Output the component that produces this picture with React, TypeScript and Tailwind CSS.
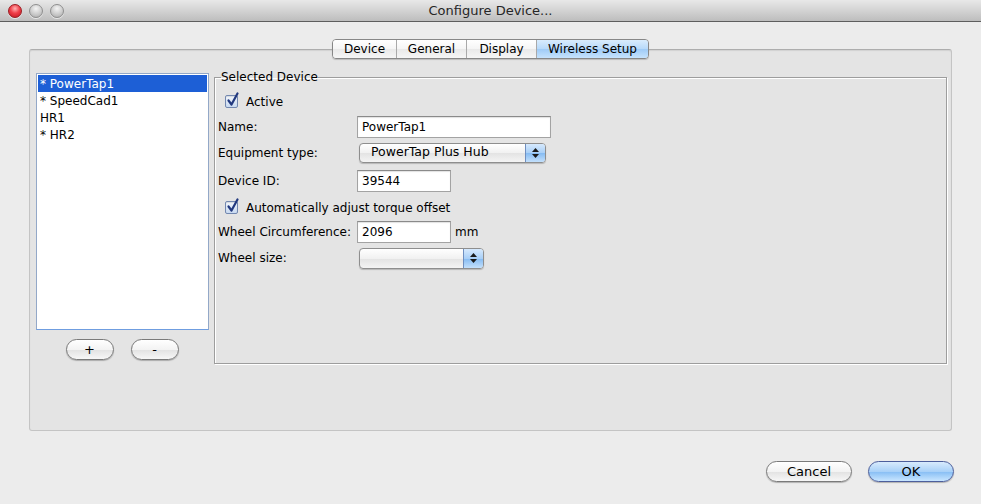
import { useState } from "react";

const devices = ["* PowerTap1", "* SpeedCad1", "HR1", "* HR2"];
const tabs = [
  { label: "Device", w: "w-[63px]" },
  { label: "General", w: "w-[70px]" },
  { label: "Display", w: "w-[70px]" },
  { label: "Wireless Setup", w: "w-[112px]" },
];

function TrafficLight({ red }: { red?: boolean }) {
  return (
    <div
      className={
        red
          ? "w-[14px] h-[14px] rounded-full border border-[#9b1c22] bg-[radial-gradient(circle_at_50%_30%,#ffb3b3_0%,#f0404a_45%,#c0141e_100%)] shadow-[0_1px_0_rgba(255,255,255,0.6)]"
          : "w-[14px] h-[14px] rounded-full border border-[#8f8f8f] bg-[radial-gradient(circle_at_50%_30%,#f4f4f4_0%,#cfcfcf_50%,#a9a9a9_100%)] shadow-[0_1px_0_rgba(255,255,255,0.6)]"
      }
    />
  );
}

function Checkbox({ label }: { label: string }) {
  return (
    <div className="flex items-center pl-[7px]">
      <div className="relative w-[13px] h-[13px] rounded-[2px] border border-[#7388b0] bg-[linear-gradient(#f4f8fd,#c9daf1)] shadow-[inset_0_1px_1px_rgba(0,0,0,0.12)]">
        <svg className="absolute -top-[4px] left-[0px]" width="14" height="15" viewBox="0 0 14 15">
          <path d="M2.5 8.5 L5.5 12.5 L11.5 1.5" fill="none" stroke="#22397f" strokeWidth="2.2" strokeLinecap="round" strokeLinejoin="round" />
        </svg>
      </div>
      <span className="ml-[8px]">{label}</span>
    </div>
  );
}

function TextField({ value, w }: { value: string; w: string }) {
  return (
    <div className={`${w} h-[22px] bg-white border border-[#a3a3a3] border-t-[#8a8a8a] shadow-[inset_0_1px_1px_rgba(0,0,0,0.12)] flex items-center pl-[4px]`}>
      {value}
    </div>
  );
}

function Combo({ value, w, h }: { value: string; w: string; h: string }) {
  return (
    <div className={`${w} ${h} ml-[2px] flex rounded-[4px] border border-[#8e8e8e] bg-[linear-gradient(#ffffff,#f1f1f1_50%,#e3e3e3_51%,#f4f4f4)] shadow-[0_1px_1px_rgba(0,0,0,0.2)] overflow-hidden`}>
      <div className="flex-1 flex items-center pl-[11px] text-[12.5px]">{value}</div>
      <div className="w-[20px] flex flex-col items-center justify-center gap-[2px] border-l border-[#6f8fc0] bg-[linear-gradient(#d6e9fd,#a8cff7_50%,#85bbf2_51%,#c3e0fc)]">
        <svg width="7" height="4" viewBox="0 0 7 4"><path d="M0 4 L3.5 0 L7 4Z" fill="#1a1a1a" /></svg>
        <svg width="7" height="4" viewBox="0 0 7 4"><path d="M0 0 L3.5 4 L7 0Z" fill="#1a1a1a" /></svg>
      </div>
    </div>
  );
}

function PillButton({ children, w, primary }: { children: React.ReactNode; w: string; primary?: boolean }) {
  return (
    <button
      type="button"
      className={
        primary
          ? `${w} h-[21px] rounded-full border border-[#4d5f9c] bg-[linear-gradient(#d8ebfd,#a9d1f8_50%,#86bdf4_51%,#c9e6ff)] shadow-[0_1px_1px_rgba(0,0,0,0.25)] flex items-center justify-center text-[13px]`
          : `${w} h-[21px] rounded-full border border-[#7a7a7a] bg-[linear-gradient(#ffffff,#f3f3f3_50%,#e2e2e2_51%,#f7f7f7)] shadow-[0_1px_1px_rgba(0,0,0,0.25)] flex items-center justify-center text-[13px]`
      }
    >
      {children}
    </button>
  );
}

export default function App() {
  const [selected, setSelected] = useState(0);
  const [tab, setTab] = useState(3);

  return (
    <div className="w-[981px] h-[504px] overflow-hidden bg-[#ececec] flex flex-col font-['DejaVu_Sans',sans-serif] text-[12px] text-black">
      {/* title bar */}
      <div className="relative h-[22px] shrink-0 flex items-center border-b border-[#5e5e5e] bg-[linear-gradient(#e8e8e8,#d3d3d3_50%,#bdbdbd_100%)]">
        <div className="flex items-center gap-[7px] pl-[8px]">
          <TrafficLight red />
          <TrafficLight />
          <TrafficLight />
        </div>
        <div className="absolute inset-0 flex items-center justify-center text-[13px] text-[#262626]">
          Configure Device...
        </div>
      </div>

      {/* tab pane */}
      <div className="mx-[29px] mt-[27px] h-[382px] shrink-0 flex flex-col rounded-[3px] border border-[#c4c4c4] border-t-[#adadad] bg-[#e4e4e4] shadow-[inset_0_1px_1px_rgba(0,0,0,0.08)]">
        <div className="-mt-[11px] self-center flex h-[20px] rounded-[4px] border border-[#878787] overflow-hidden shadow-[0_1px_1px_rgba(0,0,0,0.18)]">
          {tabs.map((t, i) => (
            <div
              key={t.label}
              onClick={() => setTab(i)}
              className={`${t.w} flex items-center justify-center ${i > 0 ? "border-l border-[#a9a9a9]" : ""} ${
                i === tab
                  ? "bg-[linear-gradient(#d9ecfd,#b7d9fa_50%,#9fcbf7_51%,#c6e3fd)]"
                  : "bg-[linear-gradient(#ffffff,#f5f5f5_50%,#e9e9e9_51%,#f6f6f6)]"
              }`}
            >
              {t.label}
            </div>
          ))}
        </div>

        <div className="mt-[10px] flex pl-[6px] pr-[4px]">
          {/* device list */}
          <div className="w-[173px] shrink-0 flex flex-col items-center">
            <div className="mt-[4px] w-full h-[257px] bg-white border border-[#93a8c8] border-b-[#6f9de0] py-px px-px">
              {devices.map((d, i) => (
                <div
                  key={d}
                  onClick={() => setSelected(i)}
                  className={`h-[17px] flex items-center pl-[2px] ${i === selected ? "bg-[#1d5fd6] text-white" : ""}`}
                >
                  {d}
                </div>
              ))}
            </div>
            <div className="mt-[9px] flex gap-[17px] -ml-[1px]">
              <PillButton w="w-[48px]">+</PillButton>
              <PillButton w="w-[48px]">-</PillButton>
            </div>
          </div>

          {/* selected device group */}
          <fieldset className="ml-[5px] flex-1 h-[295px] border border-[#9d9d9d] px-[3px] shadow-[1px_1px_0_#ffffff,inset_1px_1px_0_#ffffff]">
            <legend className="ml-[3px] leading-[17px]">Selected Device</legend>
            <div className="pt-[4px] flex flex-col">
              <div className="h-[23px] flex items-center">
                <Checkbox label="Active" />
              </div>
              <div className="h-[27px] flex items-center">
                <span className="w-[139px] shrink-0">Name:</span>
                <TextField value="PowerTap1" w="w-[194px]" />
              </div>
              <div className="h-[25px] flex items-center">
                <span className="w-[139px] shrink-0">Equipment type:</span>
                <Combo value="PowerTap Plus Hub" w="w-[187px]" h="h-[20px]" />
              </div>
              <div className="h-[32px] flex items-center">
                <span className="w-[139px] shrink-0">Device ID:</span>
                <TextField value="39544" w="w-[94px]" />
              </div>
              <div className="h-[21px] flex items-center">
                <Checkbox label="Automatically adjust torque offset" />
              </div>
              <div className="h-[28px] flex items-center">
                <span className="w-[139px] shrink-0">Wheel Circumference:</span>
                <TextField value="2096" w="w-[94px]" />
                <span className="ml-[4px]">mm</span>
              </div>
              <div className="h-[24px] flex items-center">
                <span className="w-[139px] shrink-0">Wheel size:</span>
                <Combo value="" w="w-[125px]" h="h-[21px]" />
              </div>
            </div>
          </fieldset>
        </div>
      </div>

      {/* dialog buttons */}
      <div className="mt-[30px] flex justify-end gap-[16px] pr-[27px]">
        <PillButton w="w-[86px]">Cancel</PillButton>
        <PillButton w="w-[86px]" primary>
          OK
        </PillButton>
      </div>
    </div>
  );
}
